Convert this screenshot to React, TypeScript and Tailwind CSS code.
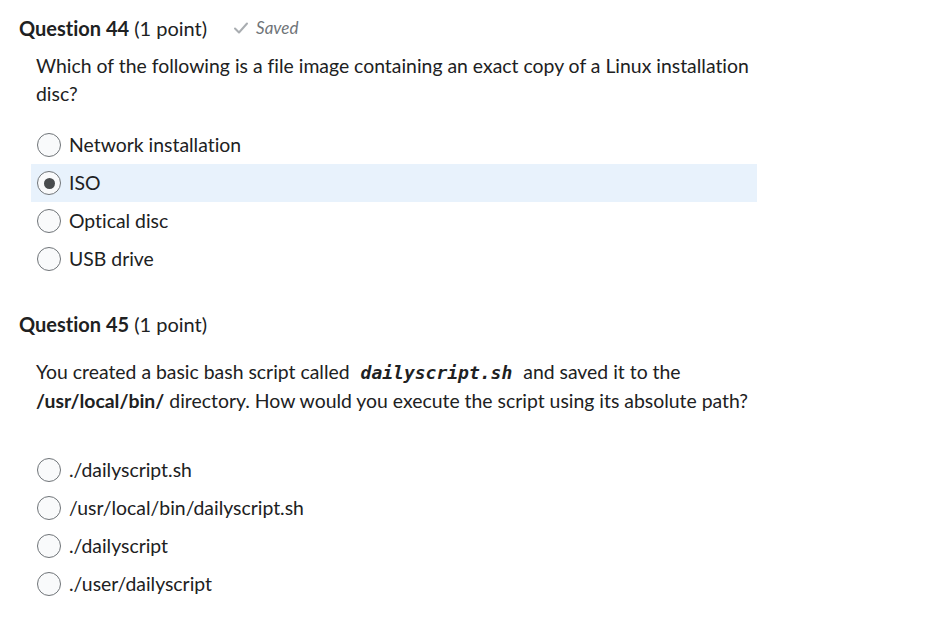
import React from "react";

function Radio({ checked }: { checked?: boolean }) {
  return (
    <span className="flex h-[24px] w-[24px] shrink-0 items-center justify-center rounded-full border border-[#6f7478] bg-[#f9fafb]">
      {checked && <span className="h-[11px] w-[11px] rounded-full bg-[#494c4e]" />}
    </span>
  );
}

function Option({ label, checked }: { label: string; checked?: boolean }) {
  return (
    <div
      className={
        "flex h-[38px] items-center gap-[8px] pl-[6px] " +
        (checked ? "bg-[#e8f2fc]" : "")
      }
    >
      <Radio checked={checked} />
      <span className="text-[19.4px] leading-[24px] text-[#202122]">{label}</span>
    </div>
  );
}

export default function App() {
  return (
    <div
      className="min-h-[617px] w-[950px] bg-white px-[19px] pt-[16px] text-[#202122]"
      style={{ fontFamily: "Lato, 'Noto Sans', sans-serif", fontVariantLigatures: "none" }}
    >
      <div className="flex h-[24px] items-center">
        <span className="text-[20px] font-bold leading-[24px]">Question 44</span>
        <span className="ml-[5px] text-[20px] leading-[24px]">(1 point)</span>
        <span className="ml-[26px] flex items-center gap-[7px] text-[#6f7478]">
          <svg width="16" height="16" viewBox="0 0 16 16" fill="none">
            <path d="M2 8.5 L6 12.5 L14 3.5" stroke="#a9adb1" strokeWidth="2" strokeLinecap="round" strokeLinejoin="round" />
          </svg>
          <span className="text-[17px] italic">Saved</span>
        </span>
      </div>

      <div className="mt-[12px] w-[738px] pl-[17px] text-[19.4px] leading-[28px]">
        Which of the following is a file image containing an exact copy of a Linux installation disc?
      </div>

      <div className="mt-[18px] ml-[12px] w-[726px]">
        <Option label="Network installation" />
        <Option label="ISO" checked />
        <Option label="Optical disc" />
        <Option label="USB drive" />
      </div>

      <div className="mt-[34px] flex h-[24px] items-center">
        <span className="text-[20px] font-bold leading-[24px]">Question 45</span>
        <span className="ml-[5px] text-[20px] leading-[24px]">(1 point)</span>
      </div>

      <div className="mt-[22px] w-[738px] pl-[17px] text-[19.4px] leading-[28px]">
        You created a basic bash script called{" "}
        <span
          className="mx-[6px] text-[18px] font-bold italic"
          style={{ fontFamily: "'DejaVu Sans Mono', 'Liberation Mono', monospace" }}
        >
          dailyscript.sh
        </span>{" "}
        and saved it to the <span className="font-bold">/usr/local/bin/</span> directory. How would you
        execute the script using its absolute path?
      </div>

      <div className="mt-[36px] ml-[12px] w-[726px]">
        <Option label="./dailyscript.sh" />
        <Option label="/usr/local/bin/dailyscript.sh" />
        <Option label="./dailyscript" />
        <Option label="./user/dailyscript" />
      </div>
    </div>
  );
}
